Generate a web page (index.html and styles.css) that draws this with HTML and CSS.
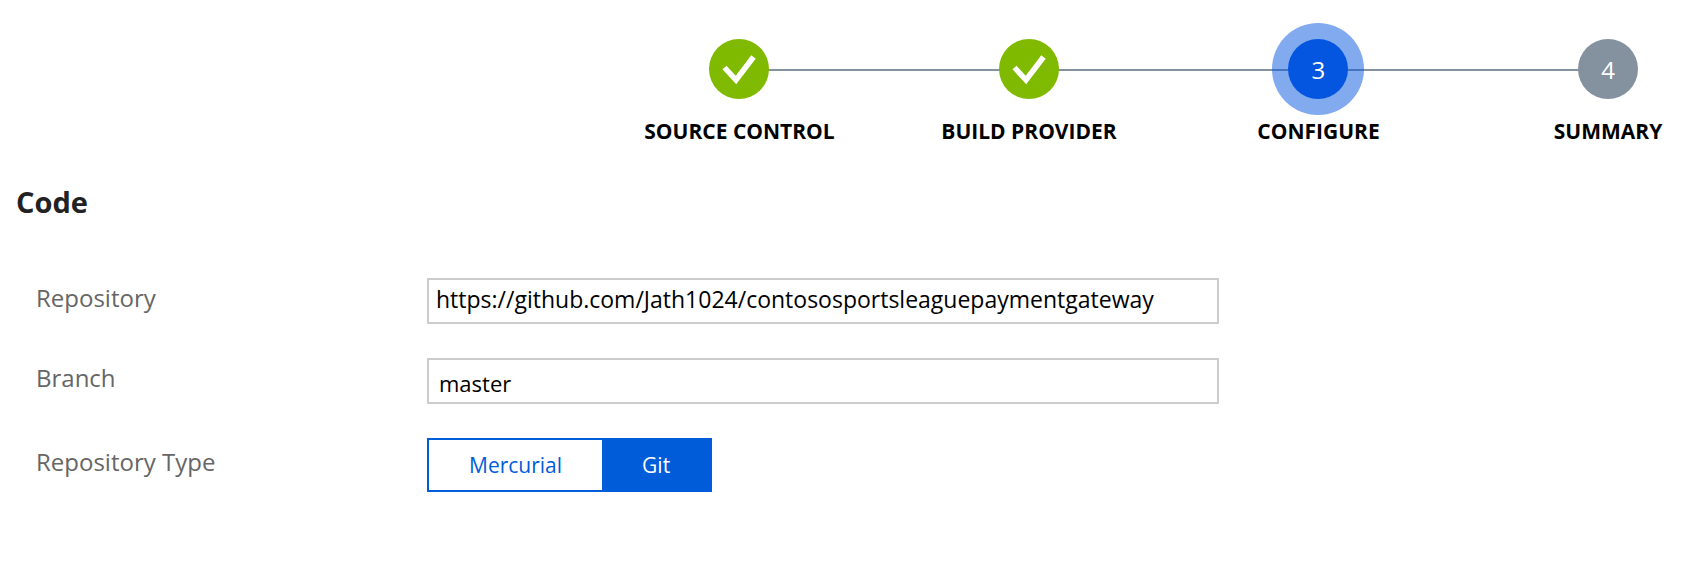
FILE: index.html
```html
<!DOCTYPE html>
<html lang="en">
<head>
<meta charset="utf-8">
<title>Configure deployment</title>
<link rel="stylesheet" href="styles.css">
</head>
<body>
<main class="page">
  <ol class="steps">
    <li class="step">
      <span class="step-badge done">
        <svg class="check" viewBox="0 0 60 60" role="img" aria-label="Completed"><path d="M15.500 28.500 L27 41 L44.500 18" fill="none" stroke="#fff" stroke-width="5.500"/></svg>
      </span>
      <span class="step-label">SOURCE CONTROL</span>
    </li>
    <li class="step">
      <span class="step-badge done">
        <svg class="check" viewBox="0 0 60 60" role="img" aria-label="Completed"><path d="M15.500 28.500 L27 41 L44.500 18" fill="none" stroke="#fff" stroke-width="5.500"/></svg>
      </span>
      <span class="step-label">BUILD PROVIDER</span>
    </li>
    <li class="step" aria-current="step">
      <span class="step-badge current">3</span>
      <span class="step-label">CONFIGURE</span>
    </li>
    <li class="step">
      <span class="step-badge">4</span>
      <span class="step-label">SUMMARY</span>
    </li>
  </ol>

  <form class="code-form">
    <h2 class="heading">Code</h2>
    <div class="row">
      <label class="row-label" for="repository">Repository</label>
      <input class="text-box" id="repository" type="text" spellcheck="false" value="https://github.com/Jath1024/contososportsleaguepaymentgateway">
    </div>
    <div class="row">
      <label class="row-label" for="branch">Branch</label>
      <input class="text-box branch" id="branch" type="text" value="master">
    </div>
    <div class="row" role="radiogroup" aria-labelledby="type-label">
      <span class="row-label" id="type-label">Repository Type</span>
      <div class="toggle">
        <label class="option"><input class="option-input" type="radio" name="type" value="mercurial">Mercurial</label>
        <label class="option"><input class="option-input" type="radio" name="type" value="git" checked>Git</label>
      </div>
    </div>
  </form>
</main>
</body>
</html>
```
FILE: styles.css
```css
* {
  box-sizing: border-box;
}

body {
  margin: 0;
  background: #fff;
  color: #000;
  font-family: "Segoe UI", "Open Sans", "Noto Sans", sans-serif;
}

.page {
  padding: 39px 16px 40px;
}

.steps {
  position: relative;
  display: flex;
  justify-content: space-between;
  margin: 0 37px 0 41.8%;
  padding: 0;
  list-style: none;
}

.steps::before {
  content: "";
  position: absolute;
  top: 30px;
  left: 30px;
  right: 30px;
  height: 2px;
  background: #84919e;
}

.step {
  position: relative;
  display: flex;
  flex-direction: column;
  align-items: center;
  gap: 18px;
  width: 60px;
}

.step-badge {
  display: grid;
  place-items: center;
  width: 60px;
  height: 60px;
  border-radius: 50%;
  background: #84919e;
  color: #fff;
  font-size: 24px;
}

.step-badge.done {
  background: #7fba00;
}

.step-badge.current {
  background: #0456e0;
  box-shadow: 0 0 0 16px rgba(4, 86, 224, 0.5);
}

.check {
  width: 60px;
  height: 60px;
}

.step-label {
  font-size: 21px;
  font-weight: 700;
  line-height: 28px;
  white-space: nowrap;
}

.heading {
  margin: 39px 0 58px;
  color: #222;
  font-size: 29px;
  font-weight: 700;
  line-height: 36px;
}

.row {
  display: grid;
  grid-template-columns: 391px minmax(0, 792px);
  align-items: center;
  margin-top: 34px;
  padding-left: 20px;
}

.row-label {
  padding-bottom: 6px;
  color: #666;
  font-size: 24px;
  line-height: 40px;
}

.text-box {
  width: 100%;
  height: 46px;
  padding: 0 7px 4px;
  border: 2px solid #ccc;
  background: #fff;
  color: #000;
  font: inherit;
  font-size: 23px;
}

.text-box.branch {
  padding: 4px 10px 0;
  font-size: 22px;
}

.toggle {
  display: flex;
  justify-self: start;
  border: 2px solid #015cda;
  background: #fff;
}

.option {
  padding: 0 40px;
  color: #015cda;
  font-size: 21px;
  line-height: 50px;
}

.option:has(:checked) {
  background: #015cda;
  color: #fff;
}

.option-input {
  position: absolute;
  appearance: none;
  margin: 0;
}
```
